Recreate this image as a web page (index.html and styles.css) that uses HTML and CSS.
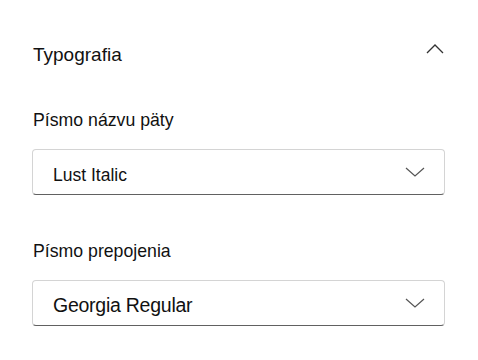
FILE: index.html
```html
<!DOCTYPE html>
<html lang="sk">
  <head>
    <meta charset="UTF-8" />
    <meta name="viewport" content="width=device-width, initial-scale=1.0" />
    <title>Typografia</title>
    <link rel="stylesheet" href="styles.css">
  </head>
  <body>
    <section class="panel">
      <div class="panel-head">
        <h2>Typografia</h2>
        <svg class="chevron-up" width="18" height="10" viewBox="0 0 18 10">
          <path d="M1 9 L9 1 L17 9" fill="none" stroke="#333" stroke-width="1.3" />
        </svg>
      </div>
      <div class="field">
        <label>Písmo názvu päty</label>
        <div class="select">
          <span class="value lust">Lust Italic</span>
          <svg width="20" height="10" viewBox="0 0 20 10">
            <path d="M1 1 L10 9 L19 1" fill="none" stroke="#555" stroke-width="1.2" />
          </svg>
        </div>
      </div>
      <div class="field second">
        <label>Písmo prepojenia</label>
        <div class="select">
          <span class="value georgia">Georgia Regular</span>
          <svg width="20" height="10" viewBox="0 0 20 10">
            <path d="M1 1 L10 9 L19 1" fill="none" stroke="#555" stroke-width="1.2" />
          </svg>
        </div>
      </div>
    </section>
  </body>
</html>
```

FILE: styles.css
```css
* {
  margin: 0;
  padding: 0;
  box-sizing: border-box;
}

body {
  font-family: 'Liberation Sans', Arial, sans-serif;
  background: #fff;
  color: #111;
}

.panel {
  padding: 42px 33px 0 32px;
}

/* Header */
.panel-head {
  display: flex;
  justify-content: space-between;
  align-items: center;
  height: 26px;
  padding-left: 1px;
  padding-right: 1px;
}

.panel-head h2 {
  font-size: 19px;
  font-weight: normal;
  line-height: 26px;
}

.chevron-up {
  align-self: flex-start;
  margin-top: 2px;
}

/* Fields */
.field {
  margin-top: 41px;
}

.field.second {
  margin-top: 45px;
}

.field label {
  display: block;
  font-size: 17.7px;
  padding-left: 1px;
  line-height: 22px;
}

.select {
  margin-top: 18px;
  height: 46px;
  border: 1px solid #d4d4d4;
  border-bottom-color: #616161;
  border-radius: 4px;
  display: flex;
  justify-content: space-between;
  align-items: center;
  padding: 0 19px 0 20px;
}

.value.lust {
  font-size: 17.5px;
  line-height: 20px;
  margin-top: 6px;
}

.value.georgia {
  font-size: 19.5px;
  line-height: 22px;
  letter-spacing: -0.25px;
  margin-top: 4px;
}
```
